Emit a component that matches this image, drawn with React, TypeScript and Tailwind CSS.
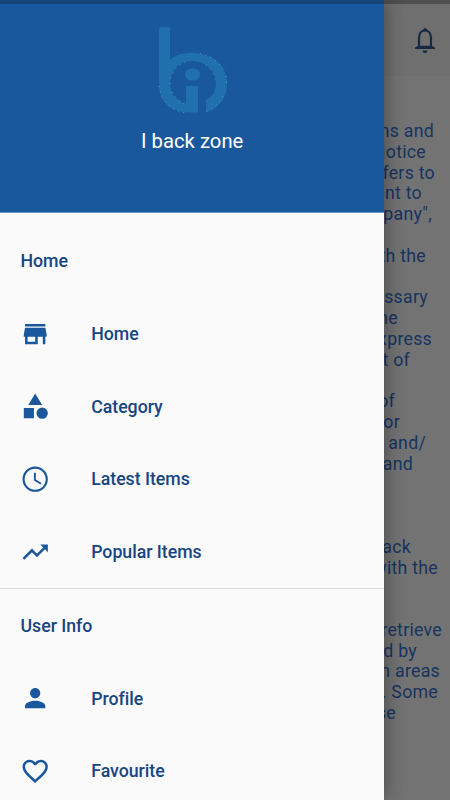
import React from "react";

const icons = {
  store: "M20 4H4v2h16V4zm1 10v-2l-1-5H4l-1 5v2h1v6h10v-6h4v6h2v-6h1zm-9 4H6v-4h6v4z",
  category: "M12 2l-5.5 9h11z M17.5 13a4.5 4.5 0 1 0 0 9a4.5 4.5 0 1 0 0-9z M3 13.5h8v8H3z",
  clock:
    "M11.99 2C6.47 2 2 6.48 2 12s4.47 10 9.99 10C17.52 22 22 17.52 22 12S17.52 2 11.99 2zM12 20.3c-4.6 0-8.3-3.7-8.3-8.3s3.7-8.3 8.3-8.3 8.3 3.7 8.3 8.3-3.7 8.3-8.3 8.3zm.5-13.3H11v6l5.25 3.15.75-1.23-4.5-2.67z",
  trending: "M16 6l2.29 2.29-4.88 4.88-4-4L2 16.59 3.41 18l6-6 4 4 6.3-6.29L22 12V6z",
  person:
    "M12 12c2.21 0 4-1.79 4-4s-1.79-4-4-4-4 1.79-4 4 1.79 4 4 4zm0 2c-2.67 0-8 1.34-8 4v2h16v-2c0-2.66-5.33-4-8-4z",
  heart:
    "M16.5 3c-1.74 0-3.41.81-4.5 2.09C10.91 3.81 9.24 3 7.5 3 4.42 3 2 5.42 2 8.5c0 3.78 3.4 6.86 8.55 11.54L12 21.35l1.45-1.32C18.6 15.36 22 12.28 22 8.5 22 5.42 19.58 3 16.5 3zm-4.4 15.55l-.1.1-.1-.1C7.14 14.24 4 11.39 4 8.5 4 6.5 5.5 5 7.5 5c1.54 0 3.04.99 3.57 2.36h1.87C13.46 5.99 14.96 5 16.5 5c2 0 3.5 1.5 3.5 3.5 0 2.89-3.14 5.74-7.9 10.05z",
};

const lines: [string, string][] = [
  ["terms and", "pr-[16px]"],
  ["Notice", "pr-[24px]"],
  ["refers to", "pr-[15px]"],
  ["client to", "pr-[28px]"],
  ['Company",', "pr-[18px]"],
  ["", ""],
  ["with the", "pr-[24px]"],
  ["", ""],
  ["necessary", "pr-[22px]"],
  ["the", "pr-[52px]"],
  ["express", "pr-[18px]"],
  ["respect of", "pr-[40px]"],
  ["", ""],
  ["of", "pr-[55px]"],
  ["or", "pr-[50px]"],
  ["and/", "pr-[24px]"],
  ["and", "pr-[37px]"],
  ["", ""],
  ["", ""],
  ["", ""],
  ["back", "pr-[39px]"],
  ["with the", "pr-[12px]"],
  ["", ""],
  ["", ""],
  ["retrieve", "pr-[8px]"],
  ["used by", "pr-[33px]"],
  ["in areas", "pr-[10px]"],
  ["site. Some", "pr-[12px]"],
  ["these", "pr-[54px]"],
];

function Row({ icon, label }: { icon: keyof typeof icons; label: string }) {
  return (
    <li className="flex h-[72.75px] items-center pl-5">
      <svg viewBox="0 0 24 24" className="h-[30.4px] w-[30.4px] shrink-0 fill-[#1a579c]">
        <path d={icons[icon]} />
      </svg>
      <span className="ml-[40.8px] pt-[1px]">{label}</span>
    </li>
  );
}

function Logo() {
  return (
    <svg viewBox="0 0 72 90" className="h-[90px] w-[72px]" fill="none">
      <path
        d="M2 4Q2 2 4 2H11Q13 2 13 4V35C19 29 27 28 35 28C55 28 70 40 70 58C70 73 61 84 49 87V75C55 72 59 66 59 58C59 45 48 36 35 36C22 36 13 45 13 58C13 68 18 75 29 79V61H41V87.5H33C13 87.5 2 76 2 58Z"
        fill="#1f70ad"
      />
      <ellipse cx="35.5" cy="49.5" rx="7.5" ry="6.3" fill="#1f70ad" />
      <path
        d="M43 28.5C51 30 60 35 65 43M69 51L70 61M66 71C62 79 56 84 48 87M13 59C13 47 22 37 33 36M49 40C54 43 57 49 58 55M2 61C4 76 14 86 29 88M15 67C18 73 22 76 27 79"
        stroke="#8fc3d6"
        strokeWidth=".6"
        strokeDasharray="1 4.5"
      />
    </svg>
  );
}

export default function App() {
  return (
    <div className="relative h-[800px] w-[450px] overflow-hidden bg-[#737373] font-['Roboto',sans-serif]">
      <div className="h-1 bg-[#4f4f4f]" />
      <header className="flex h-[72px] items-center justify-end bg-[#6f6f6f] pr-[10px]">
        <svg viewBox="0 0 30 30" className="h-[30px] w-[30px]" fill="none">
          <path
            d="M9 22.5V13C9 8.5 11.5 5.5 15 5.5S21 8.5 21 13V22.5"
            stroke="#172942"
            strokeWidth="2.2"
          />
          <path
            d="M13.2 6V4.8Q13.2 3 15 3T16.8 4.8V6ZM5 23.9V22.6L8.3 20.8H21.7L25 22.6V23.9ZM12.5 25.5H17.5Q17 28 15 28T12.5 25.5Z"
            fill="#172942"
          />
        </svg>
      </header>
      <main className="pt-[45.1px] text-[17.73px] leading-[20.79px] tracking-[0.27px] text-[#17335f]">
        {lines.map(([text, inset], i) => (
          <p key={i} className={`h-[20.79px] text-right whitespace-nowrap ${inset}`}>
            {text}
          </p>
        ))}
      </main>

      <aside className="absolute inset-y-0 left-0 w-[384.4px] overflow-hidden bg-[#fafafb] text-[17.73px] font-medium tracking-[-0.02px] text-[#174582] shadow-[0_0_20px_rgba(0,0,0,0.4)]">
        <div className="flex h-[213px] flex-col items-center border-t-4 border-b border-t-[#144478] border-b-[#6b94c2] bg-[#1a589d]">
          <div className="mt-[21px] pl-[2px]">
            <Logo />
          </div>
          <h1 className="mt-[14px] text-[20.26px] leading-6 font-normal tracking-[0.01px] text-white">
            I back zone
          </h1>
        </div>
        <ul className="mt-[11.6px]">
          <li className="flex h-[72.75px] items-center pl-[20.5px]">Home</li>
          <Row icon="store" label="Home" />
          <Row icon="category" label="Category" />
          <Row icon="clock" label="Latest Items" />
          <Row icon="trending" label="Popular Items" />
        </ul>
        <ul className="border-t border-[#dddddf]">
          <li className="flex h-[72.75px] items-center pt-[1px] pl-[20.5px]">User Info</li>
          <Row icon="person" label="Profile" />
          <Row icon="heart" label="Favourite" />
        </ul>
      </aside>
    </div>
  );
}
